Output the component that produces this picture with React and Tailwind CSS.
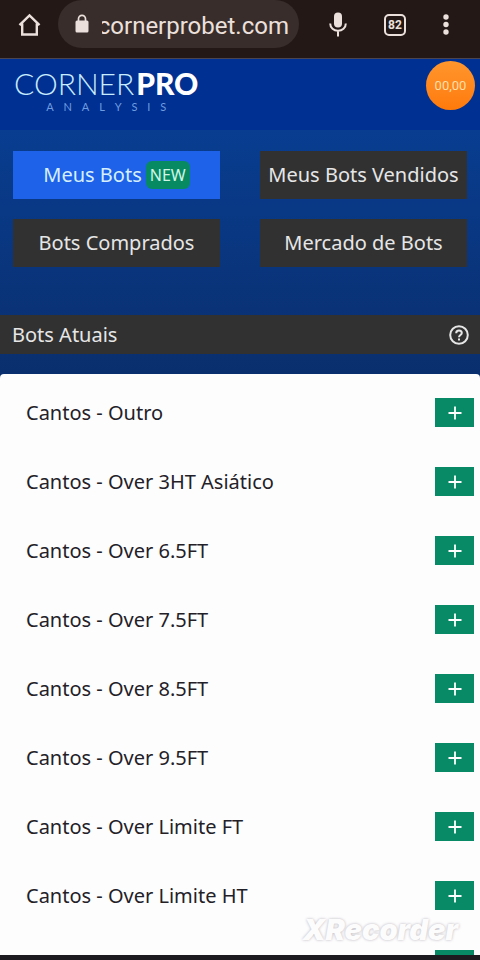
import clsx from "clsx";

const tabs = [
  { label: "Meus Bots", isNew: true, active: true },
  { label: "Meus Bots Vendidos" },
  { label: "Bots Comprados" },
  { label: "Mercado de Bots" },
];

const bots = [
  "Cantos - Outro",
  "Cantos - Over 3HT Asiático",
  "Cantos - Over 6.5FT",
  "Cantos - Over 7.5FT",
  "Cantos - Over 8.5FT",
  "Cantos - Over 9.5FT",
  "Cantos - Over Limite FT",
  "Cantos - Over Limite HT",
];

const BrowserBar = () => (
  <div className="flex h-[59px] shrink-0 items-start border-b border-[#4a4550] bg-[#231815] text-[#ece0dd]">
    <button aria-label="Home" className="ml-4 mt-3">
      <svg viewBox="0 0 26 26" className="size-[26px]" fill="none" stroke="currentColor" strokeWidth="2.4">
        <path d="M3.500 13.200 13.500 3.400l10 9.800M6.200 11.500v11h14.600v-11" />
      </svg>
    </button>

    {/* Address */}
    <div className="ml-4 flex h-12 w-[241px] items-center rounded-full bg-[#382d2a] pl-4 pr-[10px] pt-1">
      <svg viewBox="0 0 16 20" className="mb-1 mr-3 h-5 w-4 shrink-0" fill="currentColor">
        <path d="M3 6.500h10a1.500 1.500 0 0 1 1.500 1.500v9a1.500 1.500 0 0 1-1.500 1.500h-10a1.500 1.500 0 0 1-1.500-1.500v-9a1.500 1.500 0 0 1 1.500-1.500Z" />
        <path d="M4.500 8V4.800a3.500 3.500 0 0 1 7 0v3.200" fill="none" stroke="currentColor" strokeWidth="1.700" />
      </svg>
      <div className="flex flex-1 justify-end overflow-hidden whitespace-nowrap font-[Roboto,sans-serif] text-[24px] leading-8">
        cornerprobet.com
      </div>
    </div>

    <div className="flex flex-1 items-start justify-between pl-[30px] pr-[31px] pt-3">
      <button aria-label="Voice search">
        <svg viewBox="0 0 18 26" className="h-[26px] w-[18px]" fill="currentColor">
          <rect x="5" y="0.500" width="8" height="15" rx="4" />
          <path d="M1.200 11.500c0 4.500 3.500 7.300 7.800 7.300s7.800-2.800 7.800-7.300M9 19v5.500" fill="none" stroke="currentColor" strokeWidth="2" />
        </svg>
      </button>
      <button
        aria-label="Tabs"
        className="mt-[2px] flex size-[22px] items-center justify-center rounded-[5px] border-2 border-current font-[Roboto,sans-serif] text-[12px] font-bold leading-none"
      >
        82
      </button>
      <button aria-label="Menu">
        <svg viewBox="0 0 6 24" className="h-6 w-[6px]" fill="currentColor">
          <circle cx="3" cy="5" r="2.700" />
          <circle cx="3" cy="12.500" r="2.700" />
          <circle cx="3" cy="20" r="2.700" />
        </svg>
      </button>
    </div>
  </div>
);

const App = () => {
  return (
    <div className="relative flex h-screen flex-col overflow-hidden bg-[#0a2f6e] font-['Noto_Sans',sans-serif] text-[20px] leading-7">
      <BrowserBar />

      {/* Site header */}
      <header className="flex h-[71px] shrink-0 items-start justify-between bg-[#003091] pl-[14px] pr-[5px] pt-[2px]">
        <a href="#" className="mt-[6px] flex flex-col items-center font-[Lato,sans-serif] text-white">
          <span className="flex items-baseline gap-[2px] text-[30px] leading-8">
            <span className="font-light text-[#c8ecff]">CORNER</span>
            <span className="font-black">PRO</span>
          </span>
          <span className="flex w-[120px] justify-between text-[11px] leading-4 text-[#6f9ce0]">
            {"ANALYSIS".split("").map((letter, index) => (
              <span key={index}>{letter}</span>
            ))}
          </span>
        </a>
        <div className="flex size-[49px] items-center justify-center rounded-full bg-linear-to-b from-[#ff962c] to-[#ff7a08] font-[Roboto,sans-serif] text-[13px] text-[#ffdfa8]">
          00,00
        </div>
      </header>

      <div className="shrink-0 bg-linear-to-b from-[#083d90] to-[#0a2f6e] pb-5">
        {/* Tabs */}
        <nav className="grid grid-cols-2 gap-x-10 gap-y-5 px-[13px] pb-12 pt-[21px]">
          {tabs.map((tab) => (
            <button
              key={tab.label}
              className={clsx(
                "flex h-12 items-center justify-center whitespace-nowrap",
                tab.active ? "bg-[#1d62e8] text-[#d5efff]" : "bg-[#313131] text-[#e6e6e6]"
              )}
            >
              {tab.label}
              {tab.isNew && (
                <span className="ml-1 rounded-md bg-[#078a62] px-1 text-[16px] text-[#d0f5e6]">NEW</span>
              )}
            </button>
          ))}
        </nav>

        <div className="flex h-[39px] items-center justify-between bg-[#323131] pl-3 pr-[11px] text-[#e6e6e6]">
          <h1>Bots Atuais</h1>
          <button aria-label="Ajuda">
            <svg viewBox="0 0 20 20" className="size-5" fill="none" stroke="currentColor" strokeWidth="2">
              <circle cx="10" cy="10" r="8.800" />
              <path d="M7.200 8.200c0-1.700 1.200-2.700 2.800-2.700s2.800 1 2.800 2.500c0 2-2.800 2.100-2.800 4.200" />
              <path d="M10 13.400v2" />
            </svg>
          </button>
        </div>
      </div>

      {/* Bots list */}
      <ul className="min-h-0 flex-1 overflow-hidden rounded-t bg-[#fefdfe] pt-1 text-[#232127]">
        {[...bots, ""].map((bot) => (
          <li key={bot} className="flex h-[69px] items-center justify-between pl-[26px] pr-[6px]">
            <span>{bot}</span>
            <button
              aria-label={`Adicionar ${bot}`}
              className="flex h-[29px] w-[39px] items-center justify-center bg-[#078a65] text-white"
            >
              <svg viewBox="0 0 14 14" className="size-[14px]" fill="none" stroke="currentColor" strokeWidth="1.800">
                <path d="M7 0.500v13M0.500 7h13" />
              </svg>
            </button>
          </li>
        ))}
      </ul>
      <div className="h-[5px] shrink-0 bg-[#1d1b20]" />

      {/* Recorder watermark */}
      <div className="absolute bottom-[14px] right-[22px] font-[Inter,sans-serif] text-[29px] font-black italic leading-8 text-[#fdfcfd] [text-shadow:0_0_3px_#b5b2b8]">
        XRecorder
      </div>
    </div>
  );
};

export default App;
